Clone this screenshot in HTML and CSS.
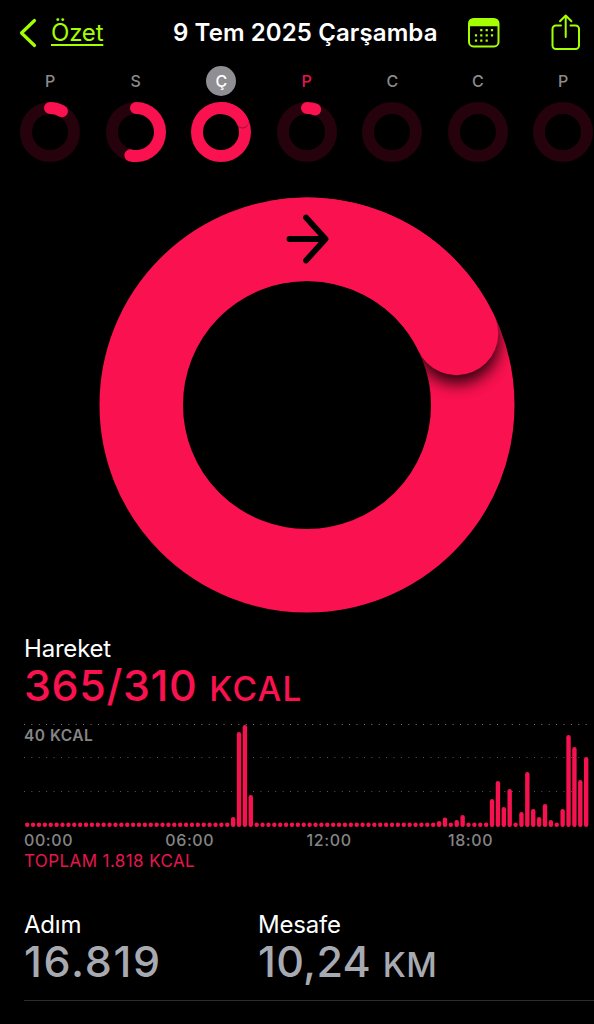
FILE: index.html
```html
<!DOCTYPE html>
<html lang="tr">
<head>
  <meta charset="UTF-8" />
  <meta name="viewport" content="width=device-width, initial-scale=1.0"/>
  <title>Özet</title>
  <link rel="stylesheet" href="styles.css">
</head>
<body>

  <header>
    <a class="back" href="#">
      <svg width="18" height="30" viewBox="0 0 18 30"><path d="M15.5 2.5 L2.5 15 L15.5 27.5"/></svg>
      <span>Özet</span>
    </a>
    <h1>9 Tem 2025 Çarşamba</h1>
    <svg class="calendar" width="32" height="30" viewBox="0 0 32 30">
      <rect class="line" x="1" y="1" width="29.5" height="27.4" rx="4.5"/>
      <path d="M1 8.2V5.5A4.5 4.5 0 0 1 5.5 1H26a4.5 4.5 0 0 1 4.5 4.5V8.2Z"/>
      <path class="dots" d="M13.3 12.2h0M18.7 12.2h0M24 12.2h0M8 17.4h0M13.3 17.4h0M18.7 17.4h0M24 17.4h0M8 22.6h0M13.3 22.6h0M18.7 22.6h0"/>
    </svg>
    <svg class="share" width="30" height="37" viewBox="0 0 30 37">
      <path d="M10 11.5H5a3.5 3.5 0 0 0-3.5 3.5V31.5A3.5 3.5 0 0 0 5 35H24.5A3.5 3.5 0 0 0 28 31.5V15a3.5 3.5 0 0 0-3.5-3.5H19.5M14.7 23V1.5M9 7.2L14.7 1.5L20.4 7.2"/>
    </svg>
  </header>

  <div class="week" id="week">
    <!-- day rings will appear here -->
  </div>

  <main>
    <svg class="move-ring" width="416" height="416" viewBox="-208 -208 416 416">
      <defs>
        <clipPath id="ringClip">
          <path clip-rule="evenodd" d="M0-207.5A207.5 207.5 0 1 1 0 207.5A207.5 207.5 0 1 1 0-207.5ZM0-124A124 124 0 1 0 0 124A124 124 0 1 0 0-124Z"/>
        </clipPath>
        <filter id="soft" x="-50%" y="-50%" width="200%" height="200%"><feGaussianBlur stdDeviation="8"/></filter>
      </defs>
      <circle class="full" r="165.75"/>
      <g clip-path="url(#ringClip)">
        <circle class="shadow" cx="150" cy="-64" r="42.5" filter="url(#soft)"/>
      </g>
      <path class="lap" d="M-30 -163A165.75 165.75 0 0 1 149.5 -71.6"/>
      <circle class="cap" cx="149.5" cy="-71.6" r="41.75"/>
      <path class="arrow" d="M-17.5 -166H17.5M-1 -187.500L18.500 -166L-1 -144.500"/>
    </svg>

    <section class="move">
      <h2>Hareket</h2>
      <p class="value">365/310 <small>KCAL</small></p>

      <div class="chart">
        <span class="scale">40 KCAL</span>
        <svg id="bars" width="565" height="103"></svg>
      </div>
      <div class="hours">
        <span>00:00</span>
        <span>06:00</span>
        <span>12:00</span>
        <span>18:00</span>
      </div>
      <p class="total">TOPLAM 1.818 KCAL</p>
    </section>

    <section class="stats">
      <div>
        <h2>Adım</h2>
        <p class="value steps">16.819</p>
      </div>
      <div>
        <h2>Mesafe</h2>
        <p class="value distance">10,24 <small>KM</small></p>
      </div>
    </section>
  </main>

  <script>
    // sweep is the ring progress in degrees
    const days = [
      { label: "P", sweep: 30 },
      { label: "S", sweep: 194 },
      { label: "Ç", sweep: 424, selected: true },
      { label: "P", sweep: 20, today: true },
      { label: "C", sweep: 0 },
      { label: "C", sweep: 0 },
      { label: "P", sweep: 0 }
    ];

    function ringSvg(sweep) {
      let parts = '<circle class="track" r="24"/>';
      if (sweep > 360) {
        const angle = (sweep - 360) * Math.PI / 180;
        const x = 24 * Math.sin(angle);
        const y = -24 * Math.cos(angle);
        parts = '<circle class="progress" r="24"/>' +
          `<circle class="overlap" cx="${x}" cy="${y + 1}" r="6"/>` +
          `<path class="progress" d="M0 -24A24 24 0 0 1 ${x} ${y}"/>`;
      } else if (sweep > 0) {
        parts += `<circle class="progress" r="24" pathLength="360" stroke-dasharray="${sweep} 360" transform="rotate(-90)"/>`;
      }
      return `<svg width="62" height="62" viewBox="-31 -31 62 62">${parts}</svg>`;
    }

    document.getElementById('week').innerHTML = days.map(day => {
      const state = day.selected ? ' selected' : day.today ? ' today' : '';
      return `<div class="day${state}"><span>${day.label}</span>${ringSvg(day.sweep)}</div>`;
    }).join('');

    // one bar per 15 minutes, idle slots keep the minimum height
    const active = {
      35: 10, 36: 95, 37: 102, 38: 32,
      70: 6, 71: 9.5, 73: 7, 74: 12,
      79: 28, 80: 46, 81: 20, 82: 38, 84: 15, 85: 55, 86: 18, 87: 10, 88: 23, 89: 7,
      91: 18, 92: 92, 93: 80, 94: 47, 95: 70
    };

    let bars = '';
    for (let i = 0; i < 96; i++) {
      const height = active[i] || 4.4;
      bars += `<rect x="${1 + i * 5.884}" y="${103 - height}" width="4.4" height="${height}" rx="2.2"/>`;
    }
    document.getElementById('bars').innerHTML = bars;
  </script>

</body>
</html>
```
FILE: styles.css
```css
body {
  margin: 0;
  height: 1024px;
  overflow: hidden;
  background-color: #000;
  color: #fff;
  font-family: 'Inter', sans-serif;
}

h1, h2, p {
  margin: 0;
}

header {
  display: flex;
  align-items: center;
  height: 66px;
  padding-left: 19px;
}

.back {
  display: flex;
  align-items: center;
  width: 154px;
  color: #a6ff00;
  font-size: 24px;
  letter-spacing: -0.2px;
  text-underline-offset: 3px;
  text-decoration-thickness: 2px;
}

.back svg {
  margin-right: 14px;
  fill: none;
  stroke: #a6ff00;
  stroke-width: 3.2;
  stroke-linecap: round;
  stroke-linejoin: round;
}

.back span {
  position: relative;
  top: -1px;
}

header h1 {
  width: 295px;
  font-size: 24px;
  font-weight: 600;
  line-height: 30px;
  letter-spacing: 0.1px;
  white-space: nowrap;
}

.calendar {
  fill: #a6ff00;
}

.calendar .line {
  fill: none;
  stroke: #a6ff00;
  stroke-width: 2;
}

.calendar .dots {
  stroke: #a6ff00;
  stroke-width: 2.2;
  stroke-linecap: square;
}

.share {
  margin: -2px 0 0 51px;
  fill: none;
  stroke: #a6ff00;
  stroke-width: 2;
  stroke-linecap: round;
  stroke-linejoin: round;
}

.week {
  display: grid;
  grid-template-columns: repeat(7, 85.5px);
  margin-left: 7.5px;
}

.day {
  display: flex;
  flex-direction: column;
  align-items: center;
  gap: 5px;
}

.day span {
  width: 30px;
  height: 30px;
  border-radius: 50%;
  color: #8b8b8d;
  font-size: 16px;
  font-weight: 500;
  line-height: 31px;
  text-align: center;
}

.day.selected span {
  background-color: #8e8e93;
  color: #fff;
}

.day.today span {
  color: #e5164f;
}

.day circle,
.day path {
  fill: none;
  stroke-width: 12;
  stroke-linecap: round;
}

.day .track {
  stroke: #25020c;
}

.day .progress {
  stroke: #fa114f;
}

.day .overlap {
  fill: #98113a;
  stroke: none;
}

.move-ring {
  display: block;
  margin: 33.5px 0 0 99px;
}

.move-ring .full,
.move-ring .lap {
  fill: none;
  stroke: #fa114f;
  stroke-width: 83.5;
}

.move-ring .cap {
  fill: #fa114f;
}

.move-ring .shadow {
  fill: #000;
  opacity: 0.85;
}

.move-ring .arrow {
  fill: none;
  stroke: #000;
  stroke-width: 5.8;
  stroke-linecap: round;
  stroke-linejoin: round;
}

.move {
  margin: 21.5px 0 0 24px;
}

h2 {
  font-size: 24px;
  font-weight: 400;
  line-height: 30px;
  letter-spacing: -0.2px;
}

.value {
  color: #a8aab2;
  font-size: 43px;
  font-weight: 450;
  line-height: 42px;
  letter-spacing: 0.6px;
  white-space: nowrap;
}

.value small {
  font-size: 33.5px;
  font-weight: 500;
  letter-spacing: 1.2px;
}

.steps {
  letter-spacing: 1.7px;
}

.distance {
  letter-spacing: 0.3px;
}

.distance small {
  letter-spacing: 0.4px;
}

.move .value {
  color: #fa114f;
}

.chart {
  width: 565px;
  height: 103px;
  margin-top: 14px;
  background-image:
    linear-gradient(90deg, #858585 1.3px, transparent 1.3px),
    linear-gradient(90deg, #5c5c5c 1.3px, transparent 1.3px),
    linear-gradient(90deg, #5c5c5c 1.3px, transparent 1.3px);
  background-size: 7.4px 1px;
  background-position: 0 0, 0 33px, 0 67px;
  background-repeat: repeat-x;
}

.scale {
  display: block;
  height: 22px;
  margin-bottom: -22px;
  color: #858585;
  font-size: 15.5px;
  font-weight: 600;
  line-height: 23px;
  letter-spacing: 0.5px;
}

.chart svg {
  display: block;
  fill: #f5124f;
}

.hours {
  display: grid;
  grid-template-columns: repeat(4, 141.3px);
  margin-top: 3px;
  color: #858585;
  font-size: 16px;
  font-weight: 500;
  line-height: 20px;
  letter-spacing: 0.6px;
}

.total {
  color: #e5164f;
  font-size: 17px;
  line-height: 22px;
  letter-spacing: 0.4px;
}

.stats {
  display: grid;
  grid-template-columns: 234px auto;
  height: 90px;
  margin: 38px 0 0 24px;
  border-bottom: 1px solid #2b2b2d;
}
```
